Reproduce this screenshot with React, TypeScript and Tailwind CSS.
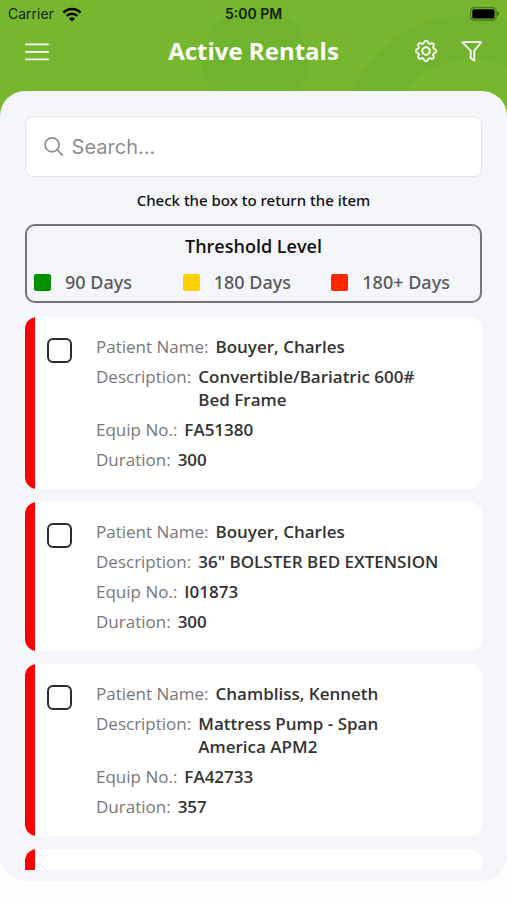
import { BsGear } from "react-icons/bs"

const legend = [
  { label: "90 Days", color: "bg-[#009000]" },
  { label: "180 Days", color: "bg-[#ffd000]" },
  { label: "180+ Days", color: "bg-[#ff2600]" },
]

const rentals = [
  { id: "r1", patient: "Bouyer, Charles", description: "Convertible/Bariatric 600# Bed Frame", equip: "FA51380", duration: "300" },
  { id: "r2", patient: "Bouyer, Charles", description: '36" BOLSTER BED EXTENSION', equip: "I01873", duration: "300" },
  { id: "r3", patient: "Chambliss, Kenneth", description: "Mattress Pump - Span America APM2", equip: "FA42733", duration: "357" },
]

function StatusBar() {
  return (
    <div className="grid h-7 grid-cols-3 items-center px-2 font-['Inter','Liberation_Sans',sans-serif] text-sm text-black/85">
      <div className="flex items-center gap-2">
        <span>Carrier</span>
        <svg width="20" height="15" viewBox="0 0 20 15" fill="none" stroke="#000" strokeWidth="2.6" aria-hidden="true">
          <path d="M1.5 5.6a12 12 0 0 1 17 0" />
          <path d="M4.8 8.9a7.4 7.4 0 0 1 10.4 0" />
          <path d="M10 14.4 7 11.4a4.2 4.2 0 0 1 6 0z" fill="#000" stroke="none" />
        </svg>
      </div>
      <span className="text-center font-semibold">5:00 PM</span>
      <svg className="justify-self-end" width="29" height="14" viewBox="0 0 29 14" aria-hidden="true">
        <rect x="0.7" y="0.6" width="25.4" height="12.6" rx="3.4" fill="none" stroke="#000" strokeOpacity="0.35" strokeWidth="1.2" />
        <rect x="2.3" y="2.2" width="22.2" height="9.4" rx="1.6" fill="#000" />
        <path d="M27 4.6v4.6c1.2-.4 1.8-1.2 1.8-2.3S28.2 5 27 4.6z" fill="#000" fillOpacity="0.4" />
      </svg>
    </div>
  )
}

function Header() {
  return (
    <header className="relative text-white">
      <StatusBar />
      <div className="flex h-[46px] items-center justify-between px-6">
        <button type="button" aria-label="Open menu" className="w-20">
          <svg width="26" height="20" viewBox="0 0 26 20" stroke="currentColor" strokeWidth="1.8" strokeLinecap="round" aria-hidden="true">
            <path d="M2 3.4h22M2 10.9h22M2 18.4h22" />
          </svg>
        </button>
        <h1 className="text-2xl font-bold">Active Rentals</h1>
        <div className="flex w-20 items-center justify-end gap-6">
          <button type="button" aria-label="Settings">
            <BsGear size={22} strokeWidth={0.4} />
          </button>
          <button type="button" aria-label="Filter">
            <svg width="22" height="22" viewBox="0 0 22 22" fill="none" stroke="currentColor" strokeWidth="1.8" strokeLinejoin="round" aria-hidden="true">
              <path d="M1.3 2.2h19l-7 8.6v9.8l-3.6-2.4v-7.4z" />
            </svg>
          </button>
        </div>
      </div>
    </header>
  )
}

function Field({ label, value }: { label: string; value: string }) {
  return (
    <div className="flex gap-[7px]">
      <dt className="shrink-0 text-[#777]">{label}:</dt>
      <dd className="font-semibold text-[#333]">{value}</dd>
    </div>
  )
}

export default function App() {
  return (
    <div className="flex h-screen flex-col bg-[#fefefe] font-['Open_Sans','Noto_Sans',sans-serif]">
      <div className="relative shrink-0 overflow-hidden bg-[#77b72f] pb-[42px]">
        {/* Faint rings behind the title */}
        <svg className="absolute right-0 top-0" width="320" height="116" viewBox="0 0 320 116" fill="none" aria-hidden="true">
          <circle cx="68" cy="60" r="53" fill="#4f9f28" fillOpacity="0.16" />
          <circle cx="283" cy="145" r="108" stroke="#4f9f28" strokeOpacity="0.14" strokeWidth="44" />
        </svg>
        <Header />
      </div>

      <main className="relative mb-[19px] -mt-[25px] flex min-h-0 flex-1 flex-col rounded-[25px] bg-[#f4f6fa] px-[25px] pb-[11px] pt-[25px]">
        <label className="flex h-[61px] shrink-0 items-center gap-2 rounded-lg border border-[#e2e4e6] bg-white px-[18px] font-['Inter','Liberation_Sans',sans-serif]">
          <svg width="21" height="21" viewBox="0 0 21 21" fill="none" stroke="#8e8e8e" strokeWidth="1.8" strokeLinecap="round" aria-hidden="true">
            <circle cx="8.7" cy="8.7" r="7.5" />
            <path d="m14.2 14.2 5.6 5.6" />
          </svg>
          <input type="search" aria-label="Search" placeholder="Search..." className="w-full text-xl outline-none placeholder:text-[#8e8e8e]" />
        </label>

        <p className="my-[13px] text-center font-['Noto_Sans','Open_Sans',sans-serif] text-[15px] font-medium leading-[21px] text-[#111]">
          Check the box to return the item
        </p>

        <section className="shrink-0 rounded-[10px] border-2 border-[#757575] pb-[5px] pt-[6px]">
          <h2 className="text-center text-lg font-semibold leading-7 text-[#111]">Threshold Level</h2>
          <ul className="mt-2 grid grid-cols-3 pl-[7px] font-['Noto_Sans','Open_Sans',sans-serif] text-lg font-medium text-[#595959]">
            {legend.map((item) => (
              <li key={item.label} className="flex items-center gap-[14px] whitespace-nowrap">
                <span className={`size-[17px] rounded-xs ${item.color}`} />
                {item.label}
              </li>
            ))}
          </ul>
        </section>

        <ul className="mt-[14px] flex min-h-0 flex-1 flex-col gap-[13px] overflow-hidden text-[17px] leading-[23px]">
          {rentals.map((rental) => (
            <li key={rental.id} className="flex shrink-0 overflow-hidden rounded-xl bg-white">
              <span className="w-[10px] shrink-0 bg-[#ff0000]" />
              <input
                type="checkbox"
                aria-label={`Return item ${rental.equip}`}
                className="ml-3 mt-[21px] size-[25px] shrink-0 appearance-none rounded-md border-2 border-[#2b2b2b] bg-white checked:bg-[#77b72f]"
              />
              <dl className="ml-6 flex flex-1 flex-col gap-[7px] pb-[18px] pr-10 pt-[18px]">
                <Field label="Patient Name" value={rental.patient} />
                <Field label="Description" value={rental.description} />
                <Field label="Equip No." value={rental.equip} />
                <Field label="Duration" value={rental.duration} />
              </dl>
            </li>
          ))}
          {/* Next card, scrolled out of view */}
          <li className="flex h-40 shrink-0 overflow-hidden rounded-xl bg-white">
            <span className="w-[10px] bg-[#ff0000]" />
          </li>
        </ul>
      </main>
    </div>
  )
}
